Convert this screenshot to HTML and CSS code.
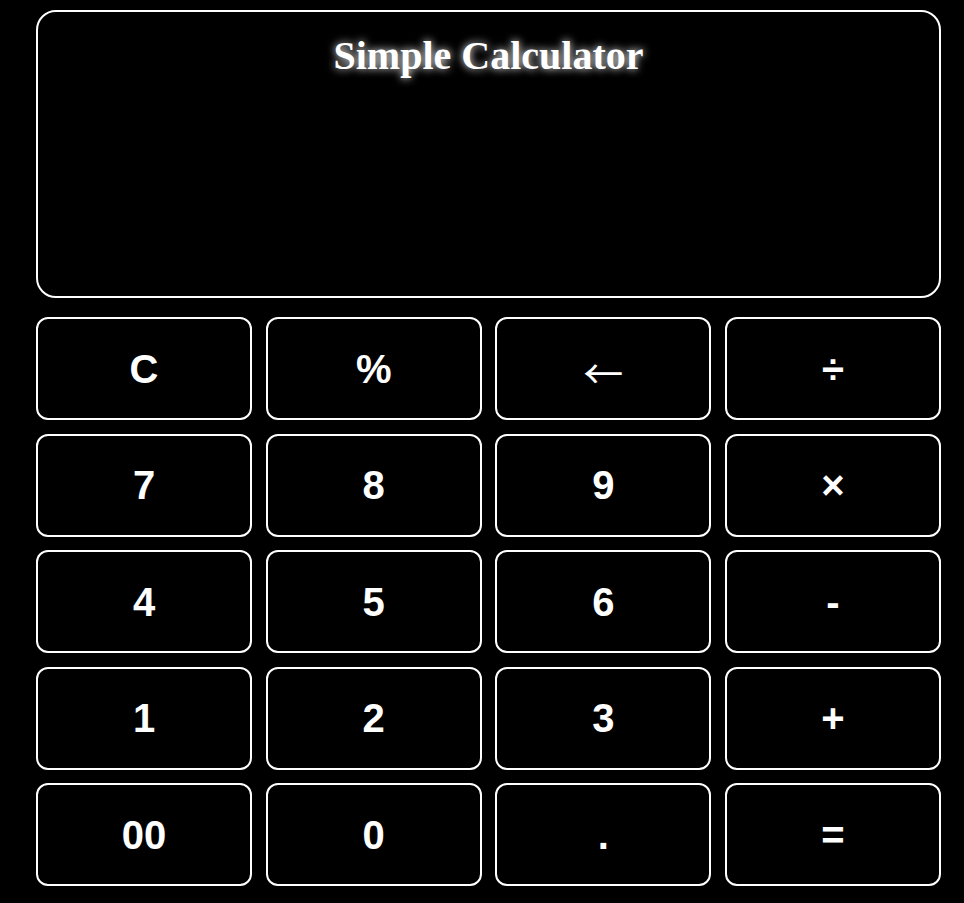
FILE: index.html
```html
<!DOCTYPE html>
<html>
<head>
<meta charset="utf-8">
<link rel="stylesheet" href="styles.css">
</head>
<body>
<div class="calc">
  <div class="display">
    <h1 class="title">Simple Calculator</h1>
  </div>
  <div class="keys">
    <button class="key">C</button>
    <button class="key">%</button>
    <button class="key arrow">←</button>
    <button class="key">÷</button>
    <button class="key">7</button>
    <button class="key">8</button>
    <button class="key">9</button>
    <button class="key">×</button>
    <button class="key">4</button>
    <button class="key">5</button>
    <button class="key">6</button>
    <button class="key">-</button>
    <button class="key">1</button>
    <button class="key">2</button>
    <button class="key">3</button>
    <button class="key">+</button>
    <button class="key">00</button>
    <button class="key">0</button>
    <button class="key">.</button>
    <button class="key">=</button>
  </div>
</div>
</body>
</html>
```
FILE: styles.css
```css
html, body {
  margin: 0;
  padding: 0;
  background: #000;
}
.calc {
  width: 905px;
  margin: 10px 0 0 36px;
  display: flex;
  flex-direction: column;
  gap: 19px;
}
.display {
  box-sizing: border-box;
  height: 288px;
  border: 2px solid #fff;
  border-radius: 20px;
  background: #000;
  padding-top: 1px;
}
.title {
  margin: 20px 0 0;
  text-align: center;
  font-family: "Liberation Serif", "Times New Roman", serif;
  font-weight: bold;
  font-size: 40px;
  line-height: 46px;
  color: #fff;
  text-shadow: 0 0 8px #fff;
}
.keys {
  display: grid;
  grid-template-columns: repeat(4, 1fr);
  grid-auto-rows: 103px;
  column-gap: 13.5px;
  row-gap: 13.5px;
}
.key {
  box-sizing: border-box;
  background: #000;
  color: #fff;
  border: 2px solid #fff;
  border-radius: 12px;
  font-family: "Liberation Sans", Arial, sans-serif;
  font-weight: bold;
  font-size: 40px;
  line-height: 46px;
  padding: 0;
}
.arrow {
  font-weight: normal;
  font-family: "Noto Sans CJK SC", sans-serif;
  padding-top: 6px;
}
```
